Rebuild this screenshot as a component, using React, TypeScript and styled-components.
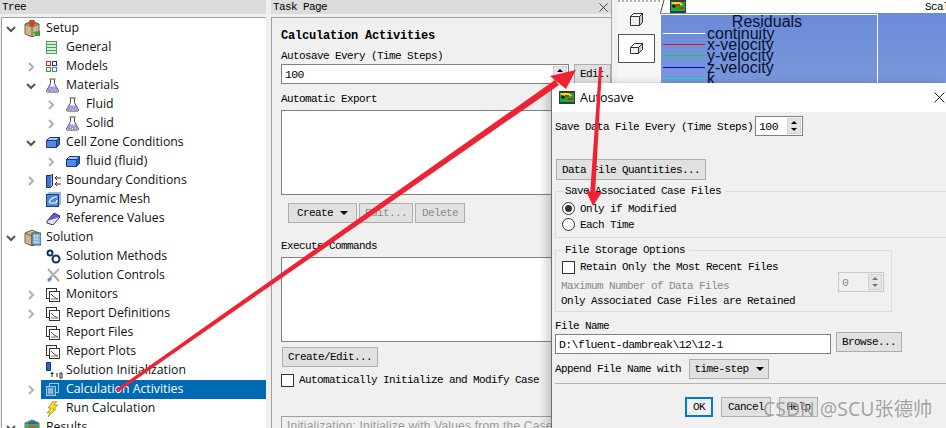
import React from 'react'
import styled, { createGlobalStyle } from 'styled-components'

const GlobalStyle = createGlobalStyle`
    html, body {
        margin: 0;
        padding: 0;
        background: #f0f0f0;
    }
`

const MONO = `'Liberation Mono', 'DejaVu Sans Mono', monospace`

const Screen = styled.div`
    position: relative;
    width: 946px;
    height: 428px;
    overflow: hidden;
    display: flex;
    background: #f0f0f0;
    font-family: ${MONO};
    font-size: 11px;
    letter-spacing: -0.6px;
    color: #000;
`

// Tree panel
const TreePanel = styled.div`
    width: 266px;
    margin-right: 5px;
    flex-shrink: 0;
    display: flex;
    flex-direction: column;
`

const PanelTitle = styled.div`
    height: 14px;
    line-height: 14px;
    padding: 0 2px;
    background: #dcdcdc;
    flex-shrink: 0;
    display: flex;
    justify-content: space-between;
`

const TreeBody = styled.div`
    flex: 1;
    margin-top: 3px;
    margin-left: 1px;
    padding-top: 1px;
    background: #fff;
    border: 1px solid #a0a0a0;
    border-bottom: none;
    border-right: none;
    overflow: hidden;
`

const TreeRow = styled.div<{ $depth: number }>`
    height: 19px;
    display: flex;
    align-items: center;
    padding-left: ${(p) => p.$depth * 20}px;
    font-family: 'Open Sans', 'Noto Sans', sans-serif;
    font-size: 12.3px;
    letter-spacing: 0;
    color: #111;
`

const Chevron = styled.span`
    width: 17px;
    height: 19px;
    margin-right: 7px;
    flex-shrink: 0;
    display: flex;
    align-items: center;
    justify-content: center;
`

const IconSlot = styled.span<{ $big?: boolean }>`
    width: ${(p) => (p.$big ? 22 : 20)}px;
    height: 19px;
    margin-left: ${(p) => (p.$big ? -2 : 0)}px;
    flex-shrink: 0;
    display: flex;
    align-items: center;
`

const TreeLabel = styled.span<{ $selected?: boolean }>`
    flex: 1;
    height: 19px;
    line-height: 18px;
    margin-left: ${(p) => (p.$selected ? '-25px' : '0')};
    padding-left: ${(p) => (p.$selected ? '25px' : '0')};
    background: ${(p) => (p.$selected ? '#0069b3' : 'transparent')};
    color: ${(p) => (p.$selected ? '#fff' : '#111')};
`

const SelectedIcon = styled.span`
    position: relative;
    z-index: 1;
    display: flex;
`

// Task page
const TaskPanel = styled.div`
    width: 340px;
    flex-shrink: 0;
    display: flex;
    flex-direction: column;
`

const CloseSlot = styled.span`
    display: flex;
    align-items: center;
    margin-right: 1px;
`

const TaskBody = styled.div`
    flex: 1;
    margin-top: 3px;
    border-top: 1px solid #a0a0a0;
    border-left: 1px solid #a0a0a0;
    padding: 12px 0 0 9px;
    overflow: hidden;
    background: #f0f0f0;
`

const PageTitle = styled.div`
    font-weight: 700;
    font-size: 12px;
    letter-spacing: -0.2px;
    height: 13px;
    line-height: 13px;
`

const FieldLabel = styled.div<{ $top?: number }>`
    height: 12px;
    line-height: 12px;
    margin-top: ${(p) => p.$top ?? 0}px;
    white-space: nowrap;
`

const InputRow = styled.div`
    display: flex;
    gap: 5px;
    margin-top: 2px;
    align-items: flex-start;
`

const TextBox = styled.div<{ $w: number; $disabled?: boolean }>`
    box-sizing: border-box;
    width: ${(p) => p.$w}px;
    height: 20px;
    background: ${(p) => (p.$disabled ? '#f0f0f0' : '#fff')};
    border: 1px solid ${(p) => (p.$disabled ? '#c8c8c8' : '#808080')};
    color: ${(p) => (p.$disabled ? '#888' : '#000')};
    display: flex;
    align-items: center;
    justify-content: space-between;
    padding: 0 0 0 3px;
    font-size: 11.5px;
    letter-spacing: -0.6px;
    flex-shrink: 0;
`

const MutedBox = styled(TextBox)`
    margin-top: -8px;
`

const Spinner = styled.span`
    width: 14px;
    height: 16px;
    margin-right: 1px;
    display: flex;
    flex-direction: column;
    align-items: center;
    justify-content: space-around;
    background: #e4e4e4;
    border: 1px solid #d0d0d0;
    box-sizing: border-box;
`

const SpinArrow = styled.i<{ $down?: boolean; $muted?: boolean }>`
    width: 0;
    height: 0;
    border-left: 3.5px solid transparent;
    border-right: 3.5px solid transparent;
    ${(p) => (p.$down ? 'border-top' : 'border-bottom')}: 3px solid ${(p) =>
        p.$muted ? '#777' : '#000'};
`

const ListBox = styled.div`
    box-sizing: border-box;
    width: 330px;
    height: 85px;
    margin-top: 5px;
    background: #fff;
    border: 1px solid #808080;
`

const ButtonRow = styled.div<{ $top: number; $left: number }>`
    display: flex;
    gap: 2px;
    margin: ${(p) => p.$top}px 0 0 ${(p) => p.$left}px;
`

const Button = styled.div<{ $w: number; $h?: number; $disabled?: boolean; $default?: boolean }>`
    box-sizing: border-box;
    width: ${(p) => p.$w}px;
    height: ${(p) => p.$h ?? 20}px;
    flex-shrink: 0;
    display: flex;
    align-items: center;
    justify-content: center;
    gap: 7px;
    white-space: nowrap;
    background: ${(p) => (p.$default ? '#f0f0f0' : '#e1e1e1')};
    border: ${(p) => (p.$default ? '2px solid #0078d7' : '1px solid #adadad')};
    color: ${(p) => (p.$disabled ? '#8a8a8a' : '#000')};
`

const ClippedButton = styled(Button)`
    justify-content: flex-start;
    padding-left: 5px;
    overflow: hidden;
`

const QuantitiesButton = styled(Button)`
    margin: 23px 0 0 1px;
`

const BrowseButton = styled(Button)`
    margin-top: -2px;
`

const DropArrow = styled.i`
    width: 0;
    height: 0;
    border-left: 4px solid transparent;
    border-right: 4px solid transparent;
    border-top: 4px solid #000;
`

const CheckRow = styled.div<{ $top?: number; $left?: number }>`
    display: flex;
    align-items: center;
    gap: 5px;
    margin-top: ${(p) => p.$top ?? 0}px;
    margin-left: ${(p) => p.$left ?? 0}px;
    height: 14px;
    white-space: nowrap;
`

const CheckBox = styled.span`
    box-sizing: border-box;
    width: 13px;
    height: 13px;
    border: 1px solid #333;
    background: #fff;
    flex-shrink: 0;
`

const HintBox = styled.div`
    box-sizing: border-box;
    width: 330px;
    height: 40px;
    margin-top: 29px;
    padding: 2px 5px;
    border: 1px solid #a0a0a0;
    background: #f0f0f0;
    color: #9a9a9a;
    font-family: 'Liberation Sans', sans-serif;
    font-size: 12px;
    letter-spacing: 0.2px;
    white-space: nowrap;
`

// Toolbar and graphics
const ToolStrip = styled.div`
    width: 49px;
    flex-shrink: 0;
    padding-left: 6px;
    box-sizing: border-box;
    background: #f0f0f0;
    border-left: 1px solid #a8a8a8;
`

const ToolInner = styled.div`
    height: 82px;
    width: 42px;
    box-sizing: border-box;
    background: #f6f6f6;
    border-top: 2px dotted #b0b0b0;
    padding-top: 3px;
    display: flex;
    flex-direction: column;
    align-items: flex-start;
`

const ToolButton = styled.div<{ $active?: boolean }>`
    box-sizing: border-box;
    width: 37px;
    height: 29px;
    display: flex;
    align-items: center;
    justify-content: center;
    background: ${(p) => (p.$active ? '#fff' : 'transparent')};
    border: 1px solid ${(p) => (p.$active ? '#555' : 'transparent')};
`

const Graphics = styled.div`
    flex: 1;
    display: flex;
    flex-direction: column;
    height: 83px;
    min-width: 0;
`

const GraphicsTab = styled.div`
    height: 13px;
    flex-shrink: 0;
    background: #fff;
    display: flex;
    align-items: center;
    gap: 5px;
    overflow: hidden;
`

const ScaleText = styled.span`
    margin-left: auto;
    width: 21px;
    overflow: hidden;
    white-space: nowrap;
`

const Viewport = styled.div`
    flex: 1;
    background: linear-gradient(#6a8bd9, #7a97dc);
    padding: 1px 0 0 0;
    overflow: hidden;
`

const Legend = styled.div`
    box-sizing: border-box;
    width: 218px;
    height: 70px;
    border: 1px solid #fff;
    border-bottom: none;
    color: #0a1030;
    font-family: 'Liberation Sans', sans-serif;
    letter-spacing: 0;
    font-size: 16px;
`

const LegendTitle = styled.div`
    height: 13px;
    line-height: 14px;
    text-align: center;
    padding-right: 4px;
`

const LegendRow = styled.div`
    height: 11.2px;
    line-height: 11px;
    display: flex;
    align-items: center;
    padding-left: 2px;
    gap: 2px;
`

const LegendLine = styled.span<{ $color: string }>`
    width: 42px;
    height: 1px;
    flex-shrink: 0;
    background: ${(p) => p.$color};
`

// Autosave dialog, a window lying over the main one
const Dialog = styled.div`
    position: absolute;
    left: 551px;
    top: 83px;
    width: 395px;
    height: 345px;
    display: flex;
    flex-direction: column;
    background: #f0f0f0;
    border-left: 1px solid #707070;
    box-shadow: -5px 0 8px rgba(0, 0, 0, 0.18);
`

const DialogTitle = styled.div`
    height: 29px;
    flex-shrink: 0;
    background: #fff;
    display: flex;
    align-items: center;
    padding: 0 0 0 7px;
    gap: 5px;
    font-family: 'Open Sans', 'Noto Sans', sans-serif;
    font-size: 12.5px;
    letter-spacing: 0;
`

const DialogClose = styled.span`
    margin-left: auto;
    margin-right: 2px;
    display: flex;
`

const DialogBody = styled.div`
    flex: 1;
    padding: 4px 0 0 3px;
    display: flex;
    flex-direction: column;
    align-items: flex-start;
`

const SpinRow = styled.div`
    display: flex;
    align-items: center;
    gap: 2px;
    white-space: nowrap;
`

const SpinLabel = styled.span`
    padding-top: 2px;
`

const Group = styled.div<{ $w: number; $h: number; $top: number }>`
    position: relative;
    box-sizing: border-box;
    width: ${(p) => p.$w}px;
    height: ${(p) => p.$h}px;
    margin-top: ${(p) => p.$top}px;
    border: 1px solid #dcdcdc;
    padding: 5px 0 0 5px;
`

const GroupLegend = styled.span`
    position: absolute;
    left: 8px;
    top: -7px;
    padding: 0 4px 0 1px;
    background: #f0f0f0;
    line-height: 12px;
    white-space: nowrap;
`

const RadioDot = styled.span<{ $on?: boolean }>`
    box-sizing: border-box;
    width: 13px;
    height: 13px;
    border-radius: 50%;
    border: 1px solid #333;
    background: #fff;
    flex-shrink: 0;
    display: flex;
    align-items: center;
    justify-content: center;
    &::after {
        content: '';
        display: ${(p) => (p.$on ? 'block' : 'none')};
        width: 7px;
        height: 7px;
        border-radius: 50%;
        background: #333;
    }
`

const RadioRow = styled.div<{ $top?: number }>`
    display: flex;
    align-items: center;
    gap: 5px;
    height: 13px;
    margin-top: ${(p) => p.$top ?? 0}px;
    margin-left: 1px;
    white-space: nowrap;
`

const MutedRow = styled.div`
    display: flex;
    justify-content: space-between;
    align-items: center;
    width: 323px;
    margin-top: 6px;
    color: #888;
    white-space: nowrap;
`

const PlainRow = styled.div`
    line-height: 12px;
    margin-top: 3px;
    white-space: nowrap;
`

const NameRow = styled.div`
    display: flex;
    align-items: flex-start;
    gap: 5px;
    margin-top: 2px;
`

const AppendRow = styled.div`
    display: flex;
    align-items: center;
    gap: 8px;
    margin-top: 5px;
    white-space: nowrap;
`

const Rule = styled.div`
    align-self: stretch;
    height: 1px;
    margin-top: 4px;
    background: #b4b4b4;
`

const DialogActions = styled.div`
    display: flex;
    gap: 8px;
    margin: 13px 0 0 130px;
`

const Watermark = styled.div`
    position: absolute;
    left: 763px;
    top: 396px;
    font-family: 'Noto Sans', 'Noto Sans CJK SC', sans-serif;
    font-size: 19.400px;
    letter-spacing: 0;
    line-height: 26px;
    white-space: nowrap;
    color: rgba(120, 120, 120, 0.7);
    text-shadow: 0 0 1px rgba(255, 255, 255, 0.8);
`

const ArrowLayer = styled.svg`
    position: absolute;
    left: 0;
    top: 0;
    pointer-events: none;
`

// Icons
const ChevronIcon = ({ open }: { open?: boolean }) => (
    <svg width="10" height="10" viewBox="0 0 10 10" fill="none" stroke={open ? '#555' : '#b0b0b0'} strokeWidth="2">
        {open ? <polyline points="1,3 5,7 9,3" /> : <polyline points="3,1 7,5 3,9" />}
    </svg>
)

const SheetIcon = () => (
    <svg width="11" height="13" viewBox="0 0 11 13">
        <rect x="0.5" y="0.5" width="10" height="12" fill="#d6ecd6" stroke="#4a9e5c" />
        <path d="M0 3.500h11M0 6.500h11M0 9.500h11" stroke="#4a9e5c" />
    </svg>
)

const ModelsIcon = () => (
    <svg width="11" height="11" viewBox="0 0 11 11" fill="#fff" strokeWidth="1">
        <rect x="0.5" y="0.5" width="4" height="4" stroke="#e02020" />
        <rect x="6.5" y="0.5" width="4" height="4" stroke="#20308a" />
        <rect x="0.5" y="6.5" width="4" height="4" stroke="#38a038" />
        <rect x="6.5" y="6.5" width="4" height="4" stroke="#3a80e0" />
    </svg>
)

const FlaskIcon = () => (
    <svg width="13" height="15" viewBox="0 0 13 15">
        <path d="M4.500 1.500v4L1 12a1 1 0 0 0 1 2h9a1 1 0 0 0 1-2L8.500 5.500v-4" fill="#fff" stroke="#444" />
        <path d="M3 8.500h7L12 13H1z" fill="#9a90e8" />
        <path d="M3.500 1h6" stroke="#444" />
        <path d="M4 11h1M7 10h1M9 12h1M6 12.500h1" stroke="#f4f2ff" />
    </svg>
)

const ZoneIcon = ({ w = 14 }: { w?: number }) => (
    <svg width={w} height="11" viewBox="0 0 14 11">
        <path d="M0.500 3.500h10v7h-10z" fill="#4f8ae8" stroke="#1a3a80" />
        <path d="M0.500 3.500l3-3h10l-3 3z" fill="#a8c8f4" stroke="#1a3a80" />
        <path d="M10.500 3.500l3-3v7l-3 3z" fill="#3060b8" stroke="#1a3a80" />
    </svg>
)

const BoundaryIcon = () => (
    <svg width="16" height="14" viewBox="0 0 16 14">
        <path d="M0.500 1.500h4v12h-4z" fill="#3c78d8" stroke="#12306e" />
        <path d="M4.500 1.500l2-1v11l-2 2" fill="#9ab8e4" stroke="#12306e" />
        <path d="M9 4h6M9 10h6M9 4l2-2M9 4l2 2M9 10l2-2M9 10l2 2" stroke="#7a1818" fill="none" />
    </svg>
)

const MeshIcon = () => (
    <svg width="15" height="15" viewBox="0 0 15 15">
        <path d="M1 2l2-2h12v12l-2 2z" fill="#a0b8d8" />
        <rect x="0.500" y="2.500" width="12" height="12" fill="#4a8ae0" stroke="#1a3a80" />
        <path d="M3 10c2-4 5-5 8-5M3 11h7l1-3" stroke="#fff" fill="none" strokeWidth="1.200" />
    </svg>
)

const BookIcon = () => (
    <svg width="15" height="13" viewBox="0 0 15 13">
        <path d="M1 9l7-8 6 3-7 8z" fill="#6a5ac8" stroke="#3a2a80" />
        <path d="M1 9v2l6 2 7-8" fill="#e8e4f8" stroke="#3a2a80" />
    </svg>
)

const BoxIcon = ({ kind }: { kind: 'setup' | 'solution' | 'results' }) => (
    <svg width="17" height="17" viewBox="0 0 17 17">
        <path d="M1 4l7-3 7 3v10l-7 3-7-3z" fill="#c8b88a" stroke="#6e6248" />
        <path d="M1 4l7 3 7-3M8 7v10" fill="none" stroke="#6e6248" />
        {kind === 'setup' && <path d="M5.500 0h5v3h2l-4.500 4-4.500-4h2z" fill="#c8462c" />}
        {kind === 'setup' && <path d="M9 12l4 4h3v-5z" fill="#3a9a3a" />}
        {kind === 'solution' && <rect x="8" y="4" width="9" height="12" fill="#8ab4d8" stroke="#34506e" />}
        {kind === 'solution' && <path d="M10 7h5M10 10h5M10 13h5" stroke="#fff" strokeDasharray="1.500 1" />}
        {kind === 'results' && <circle cx="8.500" cy="9" r="7" fill="#38b048" />}
        {kind === 'results' && <circle cx="8.500" cy="11" r="4" fill="#e84020" />}
        {kind === 'results' && <path d="M3 5a7 7 0 0 1 11 0z" fill="#2858d8" />}
    </svg>
)

const MethodsIcon = () => (
    <svg width="15" height="15" viewBox="0 0 15 15" fill="#fff" stroke="#14305e" strokeWidth="2">
        <circle cx="4" cy="4" r="2.500" />
        <circle cx="10" cy="10" r="3.500" />
    </svg>
)

const ToolsIcon = () => (
    <svg width="15" height="15" viewBox="0 0 15 15" fill="none" strokeWidth="2">
        <path d="M2 1l11 12" stroke="#a8a8a8" />
        <path d="M13 1L4 10" stroke="#b4b4b4" />
        <path d="M2 13l3-3" stroke="#5a8ac0" strokeWidth="3" />
    </svg>
)

const MonitorIcon = () => (
    <svg width="14" height="14" viewBox="0 0 14 14">
        <rect x="0.500" y="0.500" width="10" height="10" fill="#fff" stroke="#333" />
        <rect x="3.500" y="3.500" width="10" height="10" fill="#fff" stroke="#333" />
        <path d="M5 6l3 3 4 2" stroke="#e02020" fill="none" />
        <path d="M5 11h7" stroke="#30a040" />
    </svg>
)

const InitIcon = () => (
    <svg width="17" height="17" viewBox="0 0 17 17">
        <path d="M0.500 0.500h4v8h-4z" fill="#2a68c8" stroke="#12306e" />
        <path d="M6 10v5M4.500 11.500h3M10 12h2M10 14h2" stroke="#222" fill="none" />
        <path d="M14 11h2v5h-2z" stroke="#222" fill="none" />
    </svg>
)

const ActivitiesIcon = () => (
    <svg width="13" height="13" viewBox="0 0 13 13">
        <rect x="3.500" y="0.500" width="9" height="9" fill="#0069b3" stroke="#a8c8e0" />
        <rect x="0.500" y="3.500" width="9" height="9" fill="#2c86c4" stroke="#a8c8e0" />
        <path d="M2 6h5M2 8h5M2 10h5" stroke="#e0eef8" />
    </svg>
)

const BoltIcon = () => (
    <svg width="14" height="16" viewBox="0 0 14 16">
        <path d="M7 0L2 7h3L1 12l3-1-2 5 8-8H7l5-4H8l3-4z" fill="#f4e020" stroke="#8a7a10" strokeWidth="0.600" />
    </svg>
)

const CfdIcon = () => (
    <svg width="16" height="13" viewBox="0 0 16 13">
        <rect width="16" height="13" fill="#3a3a3a" />
        <rect x="1" y="2" width="14" height="9" fill="#14b030" />
        <path d="M1 2h9l3 3-9 1z" fill="#e8e020" />
        <path d="M6 4h4v2H6zM9 7h5v2H9z" fill="#e02010" />
        <circle cx="4" cy="6" r="1.800" fill="#101040" />
    </svg>
)

const CubeIcon = () => (
    <svg width="13" height="13" viewBox="0 0 13 13" fill="#eee" stroke="#333">
        <path d="M0.500 3.500h9v9h-9z" />
        <path d="M0.500 3.500l3-3h9l-3 3z" fill="#fff" />
        <path d="M9.500 3.500l3-3v9l-3 3z" fill="#ccc" />
    </svg>
)

const FlatCubeIcon = () => (
    <svg width="13" height="11" viewBox="0 0 13 11" fill="#eee" stroke="#333">
        <path d="M0.500 4.500h8v6h-8z" />
        <path d="M0.500 4.500l4-4h8l-4 4z" fill="#fff" />
        <path d="M8.500 4.500l4-4v6l-4 4z" fill="#ccc" />
    </svg>
)

const TabSlash = () => (
    <svg width="5" height="13" viewBox="0 0 5 13" stroke="#444" fill="none">
        <path d="M0.500 13L4 0" />
    </svg>
)

const XIcon = ({ size = 11 }: { size?: number }) => (
    <svg width={size} height={size} viewBox="0 0 11 11" stroke="#222" strokeWidth="1" fill="none">
        <path d="M0.500 0.500l10 10M10.500 0.500l-10 10" />
    </svg>
)

type TreeItem = {
    label: string
    depth: number
    chevron?: 'open' | 'closed'
    icon: React.ReactNode
    selected?: boolean
}

const treeItems: TreeItem[] = [
    { label: 'Setup', depth: 0, chevron: 'open', icon: <BoxIcon kind="setup" /> },
    { label: 'General', depth: 1, icon: <SheetIcon /> },
    { label: 'Models', depth: 1, chevron: 'closed', icon: <ModelsIcon /> },
    { label: 'Materials', depth: 1, chevron: 'open', icon: <FlaskIcon /> },
    { label: 'Fluid', depth: 2, chevron: 'closed', icon: <FlaskIcon /> },
    { label: 'Solid', depth: 2, chevron: 'closed', icon: <FlaskIcon /> },
    { label: 'Cell Zone Conditions', depth: 1, chevron: 'open', icon: <ZoneIcon /> },
    { label: 'fluid (fluid)', depth: 2, chevron: 'closed', icon: <ZoneIcon /> },
    { label: 'Boundary Conditions', depth: 1, chevron: 'closed', icon: <BoundaryIcon /> },
    { label: 'Dynamic Mesh', depth: 1, icon: <MeshIcon /> },
    { label: 'Reference Values', depth: 1, icon: <BookIcon /> },
    { label: 'Solution', depth: 0, chevron: 'open', icon: <BoxIcon kind="solution" /> },
    { label: 'Solution Methods', depth: 1, icon: <MethodsIcon /> },
    { label: 'Solution Controls', depth: 1, icon: <ToolsIcon /> },
    { label: 'Monitors', depth: 1, chevron: 'closed', icon: <MonitorIcon /> },
    { label: 'Report Definitions', depth: 1, chevron: 'closed', icon: <MonitorIcon /> },
    { label: 'Report Files', depth: 1, icon: <MonitorIcon /> },
    { label: 'Report Plots', depth: 1, icon: <MonitorIcon /> },
    { label: 'Solution Initialization', depth: 1, icon: <InitIcon /> },
    { label: 'Calculation Activities', depth: 1, chevron: 'closed', icon: <ActivitiesIcon />, selected: true },
    { label: 'Run Calculation', depth: 1, icon: <BoltIcon /> },
    { label: 'Results', depth: 0, chevron: 'open', icon: <BoxIcon kind="results" /> },
]

const legendRows = [
    { label: 'continuity', color: '#ffffff' },
    { label: 'x-velocity', color: '#e01030' },
    { label: 'y-velocity', color: '#10d040' },
    { label: 'z-velocity', color: '#0000ff' },
    { label: 'k', color: '#10e0e8' },
]

const NumberSpin = ({ muted }: { muted?: boolean }) => (
    <Spinner>
        <SpinArrow $muted={muted} />
        <SpinArrow $down $muted={muted} />
    </Spinner>
)

const App: React.FC = () => {
    return (
        <Screen>
            <GlobalStyle />
            <TreePanel>
                <PanelTitle>Tree</PanelTitle>
                <TreeBody>
                    {treeItems.map((item) => (
                        <TreeRow key={item.label} $depth={item.depth}>
                            <Chevron>
                                {item.chevron && <ChevronIcon open={item.chevron === 'open'} />}
                            </Chevron>
                            <IconSlot $big={item.depth === 0}>
                                <SelectedIcon>{item.icon}</SelectedIcon>
                            </IconSlot>
                            <TreeLabel $selected={item.selected}>{item.label}</TreeLabel>
                        </TreeRow>
                    ))}
                </TreeBody>
            </TreePanel>

            <TaskPanel>
                <PanelTitle>
                    Task Page
                    <CloseSlot>
                        <XIcon size={9} />
                    </CloseSlot>
                </PanelTitle>
                <TaskBody>
                    <PageTitle>Calculation Activities</PageTitle>
                    <FieldLabel $top={7}>Autosave Every (Time Steps)</FieldLabel>
                    <InputRow>
                        <TextBox $w={288}>
                            100
                            <NumberSpin />
                        </TextBox>
                        <ClippedButton $w={37}>Edit...</ClippedButton>
                    </InputRow>
                    <FieldLabel $top={9}>Automatic Export</FieldLabel>
                    <ListBox />
                    <ButtonRow $top={8} $left={7}>
                        <Button $w={69}>
                            Create
                            <DropArrow />
                        </Button>
                        <Button $w={54} $disabled>Edit...</Button>
                        <Button $w={50} $disabled>Delete</Button>
                    </ButtonRow>
                    <FieldLabel $top={17}>Execute Commands</FieldLabel>
                    <ListBox />
                    <ButtonRow $top={5} $left={1}>
                        <Button $w={96}>Create/Edit...</Button>
                    </ButtonRow>
                    <CheckRow $top={6}>
                        <CheckBox />
                        Automatically Initialize and Modify Case
                    </CheckRow>
                    <HintBox>Initialization: Initialize with Values from the Case</HintBox>
                </TaskBody>
            </TaskPanel>

            <ToolStrip>
                <ToolInner>
                    <ToolButton>
                        <CubeIcon />
                    </ToolButton>
                    <ToolButton $active>
                        <FlatCubeIcon />
                    </ToolButton>
                </ToolInner>
            </ToolStrip>

            <Graphics>
                <GraphicsTab>
                    <TabSlash />
                    <CfdIcon />
                    <ScaleText>Scaled</ScaleText>
                </GraphicsTab>
                <Viewport>
                    <Legend>
                        <LegendTitle>Residuals</LegendTitle>
                        {legendRows.map((row) => (
                            <LegendRow key={row.label}>
                                <LegendLine $color={row.color} />
                                {row.label}
                            </LegendRow>
                        ))}
                    </Legend>
                </Viewport>
            </Graphics>

            <Dialog>
                <DialogTitle>
                    <CfdIcon />
                    Autosave
                    <DialogClose>
                        <XIcon />
                    </DialogClose>
                </DialogTitle>
                <DialogBody>
                    <SpinRow>
                        <SpinLabel>Save Data File Every (Time Steps)</SpinLabel>
                        <TextBox $w={48}>
                            100
                            <NumberSpin />
                        </TextBox>
                    </SpinRow>
                    <QuantitiesButton $w={150} $h={21}>
                        Data File Quantities...
                    </QuantitiesButton>
                    <Group $w={392} $h={47} $top={11}>
                        <GroupLegend>Save Associated Case Files</GroupLegend>
                        <RadioRow $top={5}>
                            <RadioDot $on />
                            Only if Modified
                        </RadioRow>
                        <RadioRow $top={3}>
                            <RadioDot />
                            Each Time
                        </RadioRow>
                    </Group>
                    <Group $w={337} $h={62} $top={12}>
                        <GroupLegend>File Storage Options</GroupLegend>
                        <CheckRow $top={4} $left={1}>
                            <CheckBox />
                            Retain Only the Most Recent Files
                        </CheckRow>
                        <MutedRow>
                            Maximum Number of Data Files
                            <MutedBox $w={46} $disabled>
                                0
                                <NumberSpin muted />
                            </MutedBox>
                        </MutedRow>
                        <PlainRow>Only Associated Case Files are Retained</PlainRow>
                    </Group>
                    <FieldLabel $top={8}>File Name</FieldLabel>
                    <NameRow>
                        <TextBox $w={276}>D:\fluent-dambreak\12\12-1</TextBox>
                        <BrowseButton $w={66}>Browse...</BrowseButton>
                    </NameRow>
                    <AppendRow>
                        Append File Name with
                        <Button $w={80}>
                            time-step
                            <DropArrow />
                        </Button>
                    </AppendRow>
                    <Rule />
                    <DialogActions>
                        <Button $w={28} $default>OK</Button>
                        <Button $w={50}>Cancel</Button>
                        <Button $w={39}>Help</Button>
                    </DialogActions>
                </DialogBody>
            </Dialog>

            <Watermark>CSDN @SCU张德帅</Watermark>

            <ArrowLayer width="946" height="428" viewBox="0 0 946 428">
                <polygon points="116,389.500 118,392 559,85 555,80" fill="#ee2233" />
                <polygon points="576,70 550,76 566,89" fill="#ee2233" />
                <polygon points="599,67 602,67 595,195 590,195" fill="#ee2233" />
                <polygon points="593,206 586,191 602,192" fill="#ee2233" />
            </ArrowLayer>
        </Screen>
    )
}

export default App
